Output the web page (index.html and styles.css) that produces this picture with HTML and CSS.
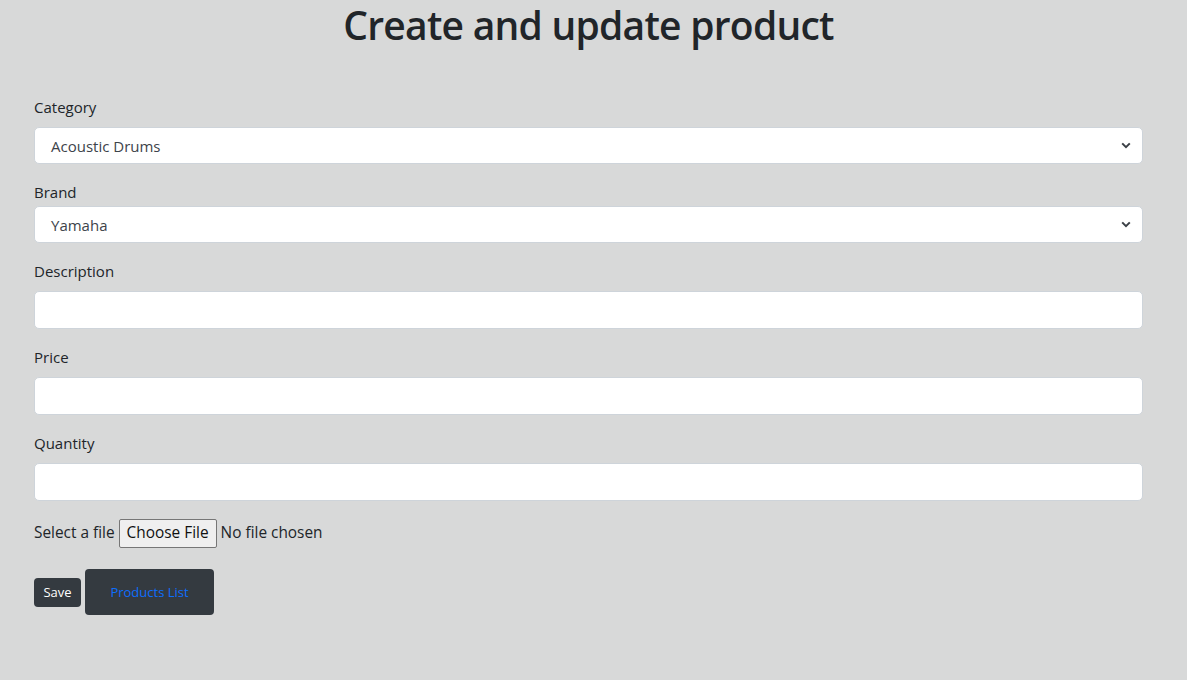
FILE: index.html
```html
<!DOCTYPE html>
<html lang="en">
<head>
<meta charset="utf-8">
<title>Create and update product</title>
<link rel="stylesheet" href="styles.css">
</head>
<body>
<main class="page">
  <h1 class="title">Create and update product</h1>
  <form class="form">
    <div class="field">
      <label class="label">Category</label>
      <div class="select">
        <span class="select-value">Acoustic Drums</span>
        <svg class="chev" width="10" height="7" viewBox="0 0 10 7"><path d="M1.2 1.4 5 5.2 8.8 1.4" fill="none" stroke="#3a3f45" stroke-width="2"/></svg>
      </div>
    </div>
    <div class="field">
      <label class="label label-tight">Brand</label>
      <div class="select">
        <span class="select-value">Yamaha</span>
        <svg class="chev" width="10" height="7" viewBox="0 0 10 7"><path d="M1.2 1.4 5 5.2 8.8 1.4" fill="none" stroke="#3a3f45" stroke-width="2"/></svg>
      </div>
    </div>
    <div class="field">
      <label class="label">Description</label>
      <div class="input"></div>
    </div>
    <div class="field">
      <label class="label">Price</label>
      <div class="input"></div>
    </div>
    <div class="field">
      <label class="label">Quantity</label>
      <div class="input"></div>
    </div>
    <div class="file-row">
      <span>Select a file</span>
      <span class="file-btn">Choose File</span>
      <span>No file chosen</span>
    </div>
    <div class="actions">
      <span class="btn btn-save">Save</span>
      <span class="btn btn-list">Products List</span>
    </div>
  </form>
</main>
</body>
</html>
```
FILE: styles.css
```css
* { box-sizing: border-box; }
html, body { margin: 0; padding: 0; }
body {
  background: #d8d9d9;
  color: #212529;
  font-family: "Open Sans", "Noto Sans", sans-serif;
  font-size: 16px;
  line-height: 24px;
  width: 1187px;
  height: 680px;
  overflow: hidden;
}
.page { padding: 0 44px 0 34px; }
.title {
  margin: 0 0 45px;
  text-align: center;
  font-size: 39px;
  line-height: 50px;
  font-weight: 600;
  letter-spacing: -0.75px;
  color: #212529;
}
.form { width: 1109px; }
.field { margin-bottom: 16px; }
.label { display: block; font-size: 15px; margin-bottom: 8px; }
.label-tight { margin-bottom: 2px; }
.select, .input {
  height: 38px;
  background: #fff;
  border: 1px solid #ced4da;
  border-radius: 5px;
  display: flex;
  align-items: center;
}
.select { height: 37px; padding: 0 11px 0 16px; justify-content: space-between; color: #3d434a; font-size: 15px; }
.select-value { line-height: 24px; }
.chev { display: block; }
.file-row {
  display: flex;
  align-items: center;
  gap: 4px;
  font-size: 15.4px;
  height: 32px;
}
.file-btn {
  display: inline-flex;
  align-items: center;
  height: 29px;
  padding: 0 7px;
  background: #efefef;
  border: 1px solid #767676;
  border-radius: 2px;
  color: #111;
}
.actions {
  display: flex;
  align-items: center;
  gap: 4px;
  margin-top: 20px;
}
.btn {
  display: inline-flex;
  align-items: center;
  justify-content: center;
  background: #343a40;
  border-radius: 4px;
  font-size: 13px;
}
.btn-save { width: 47px; height: 29px; color: #fff; }
.btn-list { width: 129px; height: 46px; color: #0d6efd; }
```
